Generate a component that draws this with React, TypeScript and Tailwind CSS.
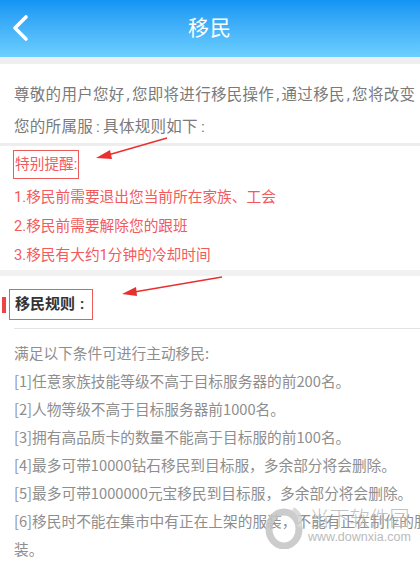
import React from 'react';

const font = { fontFamily: "Roboto, 'Noto Sans CJK SC', sans-serif" };
const cjkFirst = { fontFamily: "'Noto Sans CJK SC', Roboto, sans-serif" };

// the source renders ASCII punctuation with extra room around it
const spaced = (text: string) =>
  text.split(/([,:])/).map((part, i) =>
    part === ',' ? (
      <span key={i} className="mx-[2px]">,</span>
    ) : part === ':' ? (
      <span key={i} className="mx-[3px]">:</span>
    ) : (
      <React.Fragment key={i}>{part}</React.Fragment>
    ),
  );

const reminders = [
  '1.移民前需要退出您当前所在家族、工会',
  '2.移民前需要解除您的跟班',
  '3.移民有大约1分钟的冷却时间',
];

const rules = [
  '满足以下条件可进行主动移民:',
  '[1]任意家族技能等级不高于目标服务器的前200名。',
  '[2]人物等级不高于目标服务器前1000名。',
  '[3]拥有高品质卡的数量不能高于目标服的前100名。',
  '[4]最多可带10000钻石移民到目标服，多余部分将会删除。',
  '[5]最多可带1000000元宝移民到目标服，多余部分将会删除。',
  '[6]移民时不能在集市中有正在上架的服装，不能有正在制作的服',
  '装。',
];

const App: React.FC = () => {
  return (
    <div className="relative w-[420px] h-[561px] overflow-hidden bg-white" style={font}>
      {/* Header */}
      <div className="relative h-[57px] flex items-center justify-center bg-gradient-to-b from-[#1094f4] to-[#6bd0fd]">
        <svg className="absolute left-[11px] top-[14px]" width="18" height="28" viewBox="0 0 18 28">
          <path d="M15 3 L4 14 L15 25" fill="none" stroke="white" strokeWidth="3.6" strokeLinecap="round" strokeLinejoin="round" />
        </svg>
        <span className="text-white text-[21px] tracking-[1px]">移民</span>
      </div>
      <div className="h-[7px] bg-[#efefef]" />

      {/* Intro */}
      <div className="pt-[15px] pl-[14px] border-b-[3px] border-[#eeeeee] text-[15.5px] text-[#7a7a7a] leading-[32px] whitespace-nowrap tracking-[0.3px]">
        <p>{spaced('尊敬的用户您好,您即将进行移民操作,通过移民,您将改变')}</p>
        <p>{spaced('您的所属服:具体规则如下:')}</p>
      </div>

      {/* Reminders */}
      <div className="pl-[13px] text-[14.7px] text-[#f25a5c] whitespace-nowrap">
        <div className="mt-[4px] w-[66px] h-[29px] border border-[#ee5b5b] pl-[1px] leading-[27px]">特别提醒:</div>
        <div className="pt-[4px] pl-[1px] leading-[29px]">
          {reminders.map((r) => (
            <p key={r}>{r}</p>
          ))}
        </div>
      </div>
      <div className="h-[6px] bg-[#f1f1f1]" />

      {/* Rules header */}
      <div className="flex items-center mt-[13px]">
        <div className="ml-[2px] w-[4px] h-[16px] bg-[#ee4444]" />
        <div className="ml-[3px] w-[84px] h-[31px] border border-[#ee5b5b] flex items-center pl-[5px] text-[15px] font-bold text-[#333333] whitespace-nowrap">
          移民规则<span className="ml-[5px]">:</span>
        </div>
      </div>
      <div className="ml-[14px] mt-[8px] border-b border-[#e3e3e3]" />

      {/* Rules */}
      <div className="pt-[10px] pl-[14px] text-[14.7px] text-[#8e8e8e] leading-[28px] whitespace-nowrap" style={cjkFirst}>
        {rules.map((r) => (
          <p key={r}>{r}</p>
        ))}
      </div>

      {/* Annotation arrows */}
      <svg className="absolute left-0 top-0 pointer-events-none" width="420" height="561" viewBox="0 0 420 561">
        <line x1="167" y1="138" x2="108" y2="155" stroke="#e8302e" strokeWidth="1.4" />
        <polygon points="96,158 110,150 112,159" fill="#e8302e" />
        <line x1="222" y1="277" x2="134" y2="292" stroke="#e8302e" strokeWidth="1.4" />
        <polygon points="122,294 136,287 137,296" fill="#e8302e" />
      </svg>

      {/* Watermark */}
      <div className="absolute left-[264px] top-[505px] flex items-start gap-[2px] opacity-85 pointer-events-none whitespace-nowrap">
        <svg width="42" height="44" viewBox="0 0 42 44">
          <ellipse cx="20" cy="24" rx="15" ry="17" fill="none" stroke="#c4c4c4" strokeWidth="7" />
          <path d="M29 4 Q39 10 35 22" fill="none" stroke="#d4d4d4" strokeWidth="4" />
        </svg>
        <div className="flex flex-col items-center pt-[3px]">
          <span className="text-[20px] leading-[22px] text-[#b8b8b8] font-light">当下软件园</span>
          <span className="text-[12.5px] leading-[15px] text-[#b0b0b0]" style={{ fontFamily: "'Liberation Sans', sans-serif" }}>www.downxia.com</span>
        </div>
      </div>
    </div>
  );
};

export default App;
